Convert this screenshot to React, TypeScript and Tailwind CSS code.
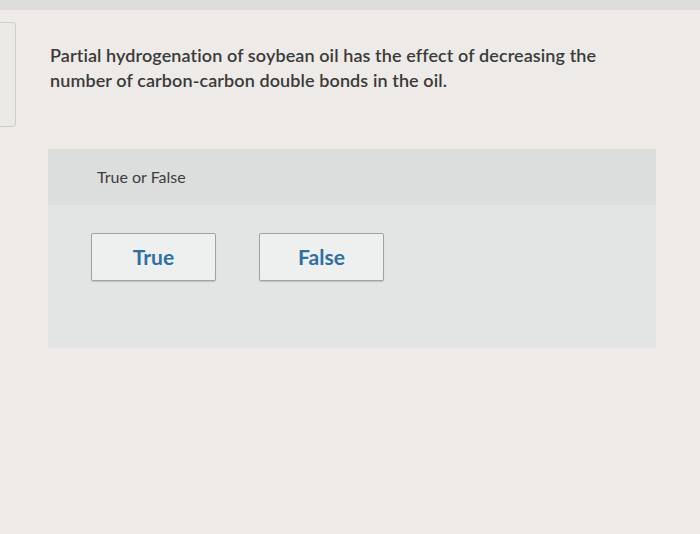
import React from 'react';

const AnswerButton: React.FC<{ label: string }> = ({ label }) => (
  <button
    type="button"
    className="w-[125px] h-[48px] bg-[#eeefef] border border-[#9fa3a6] rounded-[2px] text-[21px] font-bold text-[#2e6fa6] shadow-[0_1px_1px_rgba(0,0,0,0.15)]"
  >
    {label}
  </button>
);

export default function App() {
  return (
    <div
      className="w-[700px] h-[534px] bg-[#edeae7] overflow-hidden flex flex-col"
      style={{ fontFamily: 'Lato, "Open Sans", sans-serif' }}
    >
      {/* top strip */}
      <div className="h-[10px] bg-[#dcdcda]" />

      <div className="flex">
        {/* collapsed side card */}
        <div className="mt-[12px] w-[16px] h-[105px] border border-l-0 border-[#cfcdca] rounded-r-[4px] bg-[#eceae7]" />

        <div className="flex-1 pl-[34px] pt-[33px]">
          <p className="w-[580px] text-[18px] leading-[25px] font-semibold text-[#3a3a3a] tracking-[0.1px]">
            Partial hydrogenation of soybean oil has the effect of decreasing the number of carbon-carbon double bonds in the oil.
          </p>

          {/* question panel */}
          <div className="mt-[56px] w-[608px] bg-[#e3e4e4] -ml-[2px]">
            <div className="h-[56px] bg-[#dcdedd] pl-[49px] pt-[16px] text-[16px] text-[#3d3d3d]">
              True or False
            </div>
            <div className="h-[143px] pl-[43px] pt-[28px] flex gap-[43px] items-start">
              <AnswerButton label="True" />
              <AnswerButton label="False" />
            </div>
          </div>
        </div>
      </div>
    </div>
  );
}
